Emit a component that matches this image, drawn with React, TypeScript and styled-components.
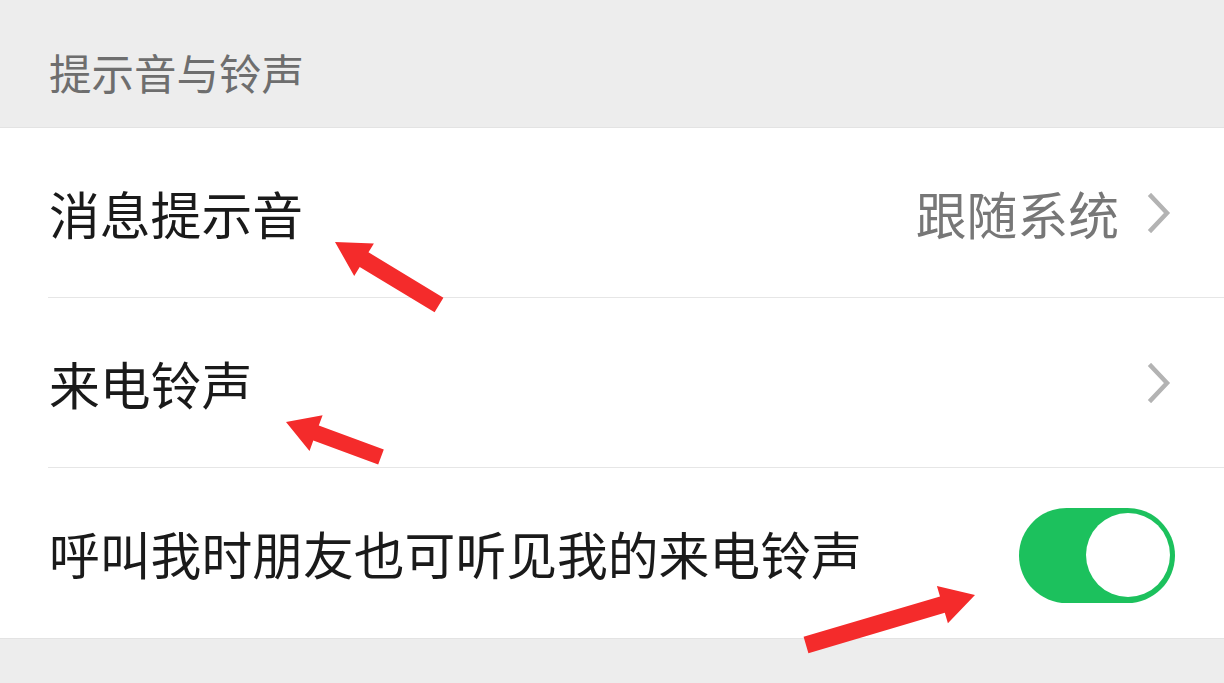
import React from "react";
import styled, { createGlobalStyle } from "styled-components";

const Global = createGlobalStyle`
  html, body { margin: 0; padding: 0; }
  body { background: #ededed; font-family: "Noto Sans CJK SC", "Noto Sans", sans-serif; }
`;

const Page = styled.div`
  position: relative;
  width: 1224px;
  height: 683px;
  background: #ededed;
  overflow: hidden;
`;

const SectionHeader = styled.div`
  height: 127px;
  box-sizing: border-box;
  padding: 49px 0 0 49px;
  font-size: 42.5px;
  line-height: 46px;
  color: #6e6e6e;
`;

const List = styled.div`
  background: #ffffff;
  border-top: 1px solid #e3e3e3;
  border-bottom: 1px solid #e3e3e3;
`;

const Row = styled.div`
  height: 170px;
  padding-left: 48px;
  display: flex;
`;

const RowInner = styled.div<{ $last?: boolean }>`
  flex: 1;
  display: flex;
  align-items: center;
  padding-right: 53px;
  border-bottom: ${(p) => (p.$last ? "none" : "1px solid #e6e6e6")};
`;

const Label = styled.div`
  flex: 1;
  font-size: 50.8px;
  line-height: 60px;
  color: #1a1a1a;
  padding-left: 1px;
`;

const Value = styled.div`
  font-size: 50.8px;
  line-height: 60px;
  color: #777777;
  margin-right: 28px;
`;

const Chevron = styled.svg`
  width: 24px;
  height: 40px;
  display: block;
`;

const Toggle = styled.div<{ $on: boolean }>`
  width: 156px;
  height: 95px;
  box-sizing: border-box;
  border-radius: 48px;
  padding: 5.5px;
  background: ${(p) => (p.$on ? "#1cc15d" : "#e5e5e5")};
  display: flex;
  justify-content: ${(p) => (p.$on ? "flex-end" : "flex-start")};
  margin-top: 4px;
  margin-right: -4px;
`;

const Knob = styled.div`
  width: 84px;
  height: 84px;
  border-radius: 50%;
  background: #ffffff;
`;

const Overlay = styled.svg`
  position: absolute;
  left: 0;
  top: 0;
  width: 1224px;
  height: 683px;
  pointer-events: none;
`;

type P = [number, number];

function arrowPoints(tail: P, tip: P, shaftW: number, headW: number, headL: number): string {
  const dx = tip[0] - tail[0];
  const dy = tip[1] - tail[1];
  const len = Math.hypot(dx, dy);
  const ux = dx / len;
  const uy = dy / len;
  const nx = -uy;
  const ny = ux;
  const bx = tip[0] - ux * headL;
  const by = tip[1] - uy * headL;
  const pts: P[] = [
    [tail[0] + nx * shaftW / 2, tail[1] + ny * shaftW / 2],
    [bx + nx * shaftW / 2, by + ny * shaftW / 2],
    [bx + nx * headW / 2, by + ny * headW / 2],
    tip,
    [bx - nx * headW / 2, by - ny * headW / 2],
    [bx - nx * shaftW / 2, by - ny * shaftW / 2],
    [tail[0] - nx * shaftW / 2, tail[1] - ny * shaftW / 2],
  ];
  return pts.map((p) => `${p[0].toFixed(1)},${p[1].toFixed(1)}`).join(" ");
}

const arrows: { tail: P; tip: P; shaft: number; head: number; headL: number }[] = [
  { tail: [439, 305], tip: [335, 242], shaft: 17, head: 38, headL: 34 },
  { tail: [381, 457], tip: [286, 422], shaft: 16, head: 38, headL: 32 },
  { tail: [806, 645], tip: [975, 595], shaft: 17, head: 39, headL: 34 },
];

const ChevronIcon = () => (
  <Chevron viewBox="0 0 24 40">
    <polyline points="4,3 20,20 4,37" fill="none" stroke="#b3b3b3" strokeWidth="4.5" strokeLinecap="square" strokeLinejoin="miter" />
  </Chevron>
);

export default function App() {
  return (
    <Page>
      <Global />
      <SectionHeader>提示音与铃声</SectionHeader>
      <List>
        <Row>
          <RowInner>
            <Label>消息提示音</Label>
            <Value>跟随系统</Value>
            <ChevronIcon />
          </RowInner>
        </Row>
        <Row>
          <RowInner>
            <Label>来电铃声</Label>
            <ChevronIcon />
          </RowInner>
        </Row>
        <Row>
          <RowInner $last>
            <Label>呼叫我时朋友也可听见我的来电铃声</Label>
            <Toggle $on>
              <Knob />
            </Toggle>
          </RowInner>
        </Row>
      </List>
      <Overlay viewBox="0 0 1224 683">
        {arrows.map((a, i) => (
          <polygon key={i} points={arrowPoints(a.tail, a.tip, a.shaft, a.head, a.headL)} fill="#f42b2b" />
        ))}
      </Overlay>
    </Page>
  );
}
